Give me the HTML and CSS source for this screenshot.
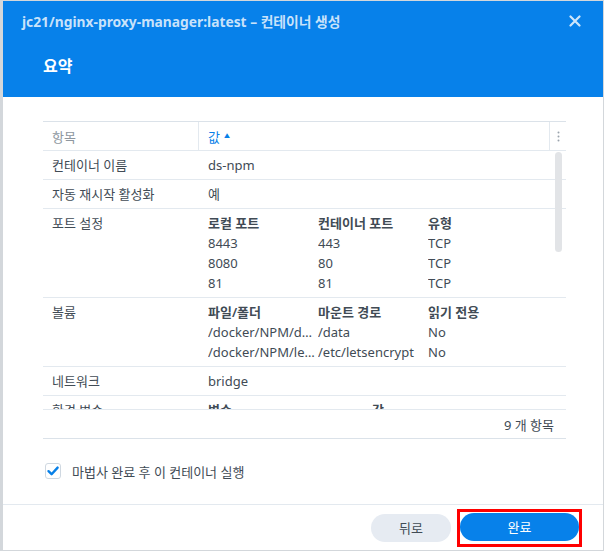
FILE: index.html
```html
<!DOCTYPE html>
<html lang="ko">
<head>
<meta charset="utf-8">
<title>컨테이너 생성</title>
<link rel="stylesheet" href="styles.css">
</head>
<body>
<div class="dialog">
  <div class="header">
    <div class="titlebar">
      <span class="title">jc21/nginx-proxy-manager:latest – 컨테이너 생성</span>
      <svg class="close" width="12" height="12" viewBox="0 0 12 12"><path d="M1.5 1.5 L10.5 10.5 M10.5 1.5 L1.5 10.5" stroke="currentColor" stroke-width="2.2" stroke-linecap="round"/></svg>
    </div>
    <div class="heading">요약</div>
  </div>
  <div class="content">
    <div class="grid">
      <div class="grid-head">
        <div class="hcell hcell-name">항목</div>
        <div class="hcell hcell-value">값 <span class="sort">▲</span></div>
        <div class="hcell hcell-menu">
          <svg width="3" height="11" viewBox="0 0 3 11"><circle cx="1.5" cy="1.5" r="1" fill="#9aa3ac"/><circle cx="1.5" cy="5.5" r="1" fill="#9aa3ac"/><circle cx="1.5" cy="9.5" r="1" fill="#9aa3ac"/></svg>
        </div>
      </div>
      <div class="grid-body">
        <div class="row">
          <div class="cell-name">컨테이너 이름</div>
          <div class="cell-value">ds-npm</div>
        </div>
        <div class="row">
          <div class="cell-name">자동 재시작 활성화</div>
          <div class="cell-value">예</div>
        </div>
        <div class="row">
          <div class="cell-name">포트 설정</div>
          <div class="cell-value">
            <div class="sub sub3">
              <span class="sh">로컬 포트</span><span class="sh">컨테이너 포트</span><span class="sh">유형</span>
              <span>8443</span><span>443</span><span>TCP</span>
              <span>8080</span><span>80</span><span>TCP</span>
              <span>81</span><span>81</span><span>TCP</span>
            </div>
          </div>
        </div>
        <div class="row">
          <div class="cell-name">볼륨</div>
          <div class="cell-value">
            <div class="sub sub3">
              <span class="sh">파일/폴더</span><span class="sh">마운트 경로</span><span class="sh">읽기 전용</span>
              <span>/docker/NPM/data</span><span>/data</span><span>No</span>
              <span>/docker/NPM/letsencrypt</span><span>/etc/letsencrypt</span><span>No</span>
            </div>
          </div>
        </div>
        <div class="row">
          <div class="cell-name">네트워크</div>
          <div class="cell-value">bridge</div>
        </div>
        <div class="row">
          <div class="cell-name">환경 변수</div>
          <div class="cell-value">
            <div class="sub sub2">
              <span class="sh">변수</span><span class="sh">값</span>
              <span>PATH</span><span>/usr/local/sbin</span>
            </div>
          </div>
        </div>
        <div class="scrollbar"></div>
      </div>
      <div class="grid-foot">9 개 항목</div>
    </div>
    <label class="check">
      <span class="box"><svg width="14" height="14" viewBox="0 0 14 14"><path d="M2.5 7.2 L5.6 10.2 L11.6 3.6" fill="none" stroke="#0780e8" stroke-width="2.4" stroke-linecap="round" stroke-linejoin="round"/></svg></span>
      <span class="check-label">마법사 완료 후 이 컨테이너 실행</span>
    </label>
  </div>
  <div class="footer">
    <button class="btn btn-back">뒤로</button>
    <span class="highlight"><button class="btn btn-done">완료</button></span>
  </div>
</div>
</body>
</html>
```
FILE: styles.css
```css
* { box-sizing: border-box; }
html, body { margin: 0; padding: 0; }
body {
  width: 604px;
  height: 551px;
  background: #d3d7db;
  font-family: "Noto Sans", "Noto Sans CJK KR", sans-serif;
  font-size: 13px;
  color: #414b55;
  overflow: hidden;
}
.dialog {
  margin: 1px 0 0 3px;
  width: 600px;
  height: 549px;
  background: #fff;
  display: flex;
  flex-direction: column;
}
.header {
  background: #0781ea;
  height: 96px;
  display: flex;
  flex-direction: column;
}
.titlebar {
  height: 40px;
  display: flex;
  align-items: center;
  justify-content: space-between;
  padding: 0 22px 0 19px;
}
.title {
  font-weight: 700;
  font-size: 13.8px;
  color: rgba(255,255,255,0.78);
}
.close { color: rgba(255,255,255,0.8); }
.heading {
  padding: 14px 0 0 40px;
  font-size: 16px;
  font-weight: 700;
  line-height: 22px;
  color: #fff;
}
.content {
  flex: 1;
  padding: 24px 37px 0 40px;
  display: flex;
  flex-direction: column;
}
.grid {
  border-top: 1px solid #dbe2e9;
  border-bottom: 1px solid #dbe2e9;
  display: flex;
  flex-direction: column;
}
.grid-head {
  display: grid;
  grid-template-columns: 155px 1fr 17px;
  height: 29px;
  border-bottom: 1px solid #e3e9ef;
}
.hcell {
  display: flex;
  align-items: center;
  padding-left: 9px;
  color: #8e979f;
}
.hcell-value {
  border-left: 1px solid #e3e9ef;
  color: #0780e8;
  padding-left: 9px;
}
.sort { font-size: 6px; margin-left: 4px; margin-top: -2px; }
.hcell-menu {
  border-left: 1px solid #e3e9ef;
  padding-left: 7px;
}
.grid-body {
  position: relative;
  height: 259px;
  overflow: hidden;
  border-bottom: 1px solid #e3e9ef;
}
.row {
  display: grid;
  grid-template-columns: 155px 1fr;
  padding: 4px 0;
  line-height: 20px;
  border-bottom: 1px solid #e3e9ef;
}
.cell-name { padding-left: 9px; }
.cell-value { padding-left: 10px; padding-right: 20px; }
.sub { display: grid; }
.sub3 { grid-template-columns: 110px 110px 1fr; }
.sub2 { grid-template-columns: 164px 1fr; }
.sub span {
  white-space: nowrap;
  overflow: hidden;
  text-overflow: ellipsis;
}
.sub .sh { font-weight: 600; }
.scrollbar {
  position: absolute;
  right: 4px;
  top: 1px;
  width: 7px;
  height: 100px;
  border-radius: 4px;
  background: #e2e4e7;
}
.grid-foot {
  height: 28px;
  display: flex;
  align-items: center;
  justify-content: flex-end;
  padding-right: 12px;
}
.check {
  margin-top: 24px;
  display: flex;
  align-items: center;
  height: 16px;
  padding-left: 2px;
}
.box {
  width: 16px;
  height: 16px;
  border: 1px solid #cfd8e1;
  border-radius: 3px;
  display: flex;
  align-items: center;
  justify-content: center;
}
.check-label { margin-left: 11px; }
.footer {
  border-top: 1px solid #e3e9ef;
  height: 46px;
  display: flex;
  align-items: center;
  justify-content: flex-end;
  padding-right: 21px;
  gap: 6px;
}
.btn {
  font-family: "Noto Sans", "Noto Sans CJK KR", sans-serif;
  font-size: 13px;
  height: 28px;
  border: none;
  border-radius: 14px;
  padding: 0;
}
.btn-back {
  width: 80px;
  background: #e6ebf2;
  color: #414b55;
}
.highlight {
  display: flex;
  border: 3px solid #f00;
  padding: 1px 0 3px 0;
}
.btn-done {
  width: 119px;
  background: #0781ea;
  color: #fff;
}
```
